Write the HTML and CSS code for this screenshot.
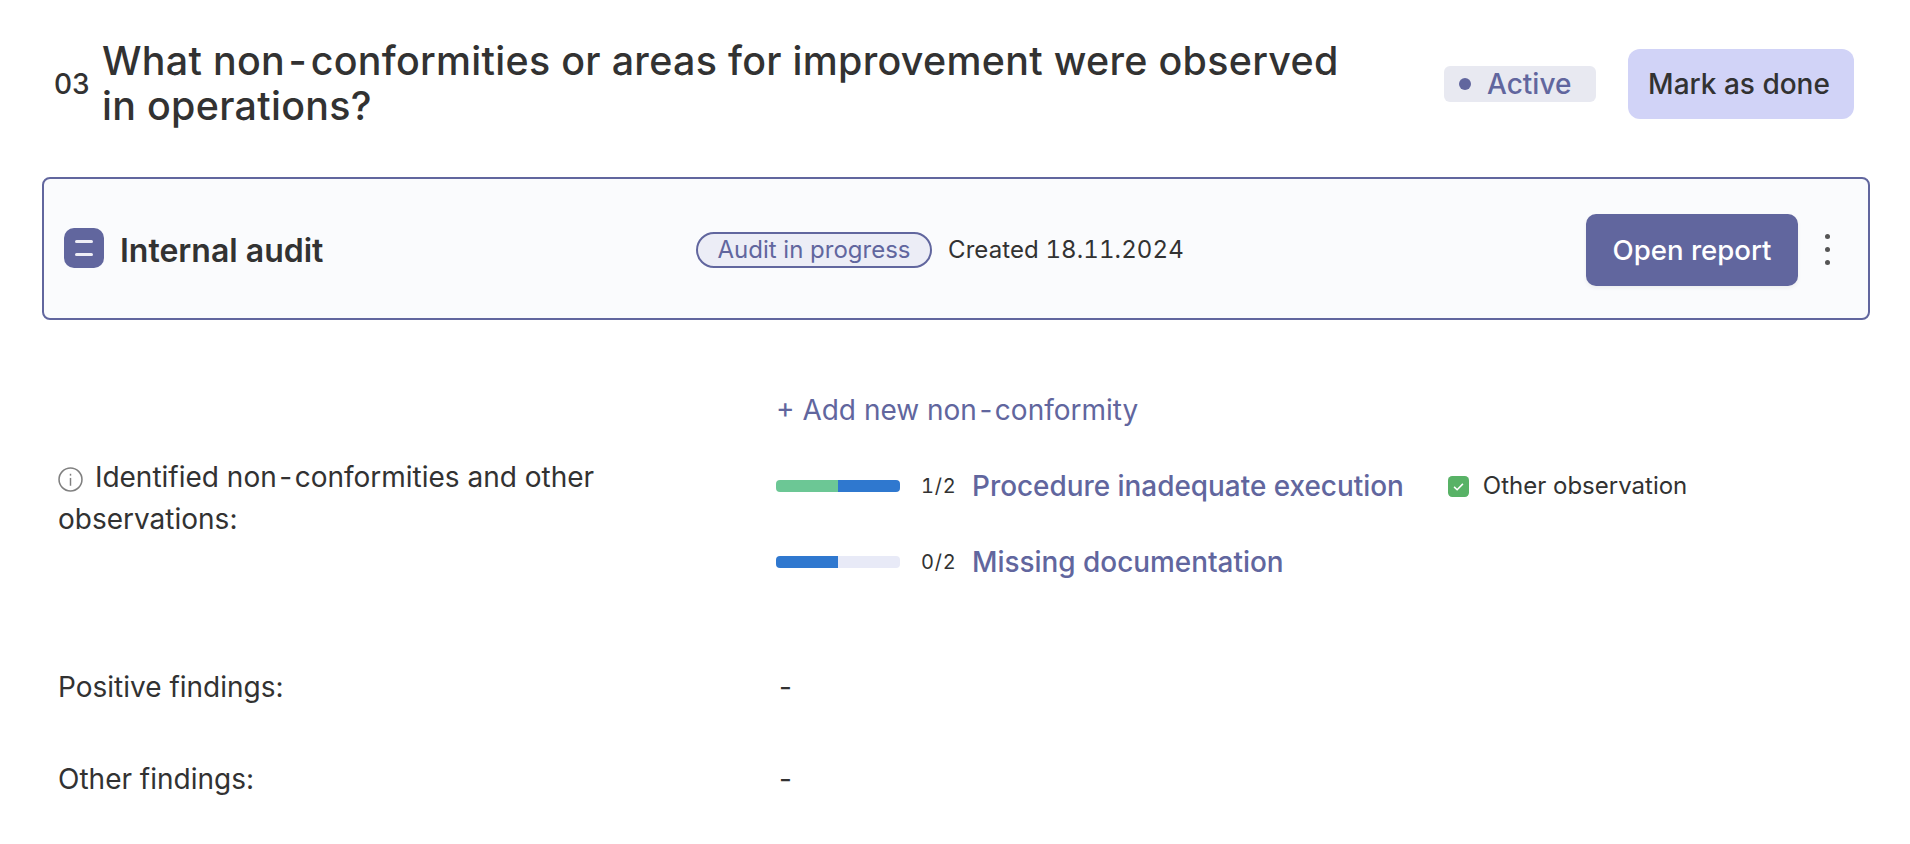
FILE: index.html
```html
<!DOCTYPE html>
<html lang="en">
<head>
<meta charset="utf-8">
<title>Question 03</title>
<link rel="stylesheet" href="styles.css">
</head>
<body>
<main class="page">
  <header class="question">
    <span class="q-number">03</span>
    <h1 class="q-title"><span class="line">What non<span class="hy">-</span>conformities or areas for improvement were observed</span> <span class="line">in operations?</span></h1>
    <span class="status"><span class="status-dot"></span>Active</span>
    <button class="btn-done">Mark as done</button>
  </header>

  <section class="card">
    <span class="card-icon"><span class="card-icon-line"></span><span class="card-icon-line"></span></span>
    <h2 class="card-title">Internal audit</h2>
    <div class="card-meta">
      <span class="pill">Audit in progress</span>
      <span class="created">Created 18.11.2024</span>
    </div>
    <button class="btn-open">Open report</button>
    <span class="kebab"><i></i><i></i><i></i></span>
  </section>

  <section class="details">
    <div class="label label-first">
      <span class="line"><svg class="info" viewBox="0 0 24 24" width="25" height="25" aria-hidden="true"><circle cx="12" cy="12" r="11" fill="none" stroke="#808080" stroke-width="1.5"/><rect x="11.3" y="10.5" width="1.4" height="7.5" fill="#808080"/><rect x="11.3" y="6.5" width="1.4" height="1.8" fill="#808080"/></svg>
      Identified non<span class="hy">-</span>conformities and other</span> <span class="line">observations:</span>
    </div>
    <div class="value-list">
      <a class="add-link">+ Add new non<span class="hy">-</span>conformity</a>
      <div class="nc-row">
        <span class="bar"><span class="seg seg-green"></span><span class="seg seg-blue"></span></span>
        <span class="count">1/2</span>
        <a class="nc-link">Procedure inadequate execution</a>
        <span class="check"><svg viewBox="0 0 20 20" width="21" height="21" aria-hidden="true"><rect width="20" height="20" rx="4" fill="#58b266"/><path d="M5.8 10.3l2.9 2.8 5.5-5.6" fill="none" stroke="#fff" stroke-width="1.5"/></svg></span>
        <span class="observation">Other observation</span>
      </div>
      <div class="nc-row">
        <span class="bar"><span class="seg seg-blue"></span><span class="seg seg-empty"></span></span>
        <span class="count">0/2</span>
        <a class="nc-link">Missing documentation</a>
      </div>
    </div>
    <div class="label label-positive">Positive findings:</div>
    <div class="value value-positive">-</div>
    <div class="label label-other">Other findings:</div>
    <div class="value value-other">-</div>
  </section>
</main>
</body>
</html>
```
FILE: styles.css
```css
* { box-sizing: border-box; }
html, body { margin: 0; height: 100%; background: #fff; overflow: hidden; }
body { font-family: Inter, "Noto Sans", sans-serif; color: #323232; }
.page { padding: 49px 40px 0 42px; }
.line { display: block; }
.hy { margin: 0 0.09em; }
.question { display: flex; align-items: center; height: 70px; padding-left: 12px; padding-right: 16px; }
.q-number { font-size: 28px; font-weight: 550; width: 48px; flex: none; }
.q-title { margin: 0 80px 0 0; flex: none; width: 1262px; font-size: 39.4px; line-height: 45px; font-weight: 550; letter-spacing: 0.3px; }
.status { display: flex; align-items: center; flex: none; height: 36px; width: 152px; padding-left: 15px; background: #e8e9f1; color: #61669e; border-radius: 6px; font-size: 28px; font-weight: 550; }
.status-dot { width: 12px; height: 12px; border-radius: 50%; background: #61669e; margin-right: 16px; }
.btn-done { margin-left: 32px; flex: none; width: 226px; height: 70px; padding: 0 4px 0 0; border: 0; border-radius: 12px; background: #d1d3f7; color: #323232; font: 500 28px Inter, sans-serif; }
.card { display: flex; align-items: center; margin-top: 58px; height: 143px; border: 2px solid #61669e; border-radius: 8px; background: #fafbfd; padding: 2px 38px 0 20px; }
.card-icon { display: flex; flex-direction: column; justify-content: center; gap: 10px; align-items: center; width: 40px; height: 40px; flex: none; border-radius: 10px; background: #61669e; margin-top: -4px; }
.card-icon-line { display: block; width: 18px; height: 3px; border-radius: 2px; background: #eeeef6; }
.card-title { margin: 1px 0 0 16px; width: 576px; flex: none; font-size: 32px; font-weight: 600; }
.card-meta { display: flex; align-items: center; flex: 1; gap: 16px; }
.pill { display: flex; align-items: center; justify-content: center; width: 236px; height: 36px; border: 2px solid #61669e; border-radius: 18px; background: #ecedf6; color: #61669e; font-size: 24px; }
.created { font-size: 24px; font-variant-numeric: tabular-nums; letter-spacing: 0.1px; }
.btn-open { flex: none; width: 212px; height: 72px; border: 0; border-radius: 10px; background: #61669e; color: #fff; font: 500 27.6px Inter, sans-serif; box-shadow: 0 2px 4px rgba(0,0,0,.06); }
.kebab { display: flex; flex-direction: column; gap: 8px; margin-left: 27px; width: 5px; flex: none; }
.kebab i { display: block; width: 5px; height: 5px; border-radius: 50%; background: #555; }
.details { display: grid; grid-template-columns: 718px 1fr; padding-left: 16px; margin-top: 64px; font-size: 28px; }
.label { line-height: 42px; }
.label-first { padding-top: 72px; }
.info { vertical-align: -5px; margin-right: 4px; }
.value-list { display: flex; flex-direction: column; gap: 48px; padding: 12px 0 0; }
.add-link { color: #61669e; font-size: 28px; line-height: 28px; font-weight: 400; }
.nc-row { display: flex; align-items: center; height: 28px; }
.bar { display: flex; width: 124px; height: 12px; border-radius: 4px; overflow: hidden; flex: none; }
.seg { flex: 1; }
.seg-green { background: #6cc795; }
.seg-blue { background: #2f78cf; }
.seg-empty { background: #e8eaf7; }
.count { margin-left: 21px; width: 51px; flex: none; font-size: 20px; letter-spacing: 0.8px; font-variant-numeric: tabular-nums; }
.nc-link { color: #61669e; font-size: 27.9px; font-weight: 550; }
.check { display: flex; margin-left: 44px; }
.observation { margin: -2px 0 0 14px; font-size: 24px; }
.label-positive, .value-positive { margin-top: 90px; }
.label-other, .value-other { margin-top: 50px; }
.value { line-height: 42px; padding-left: 3px; }
```
